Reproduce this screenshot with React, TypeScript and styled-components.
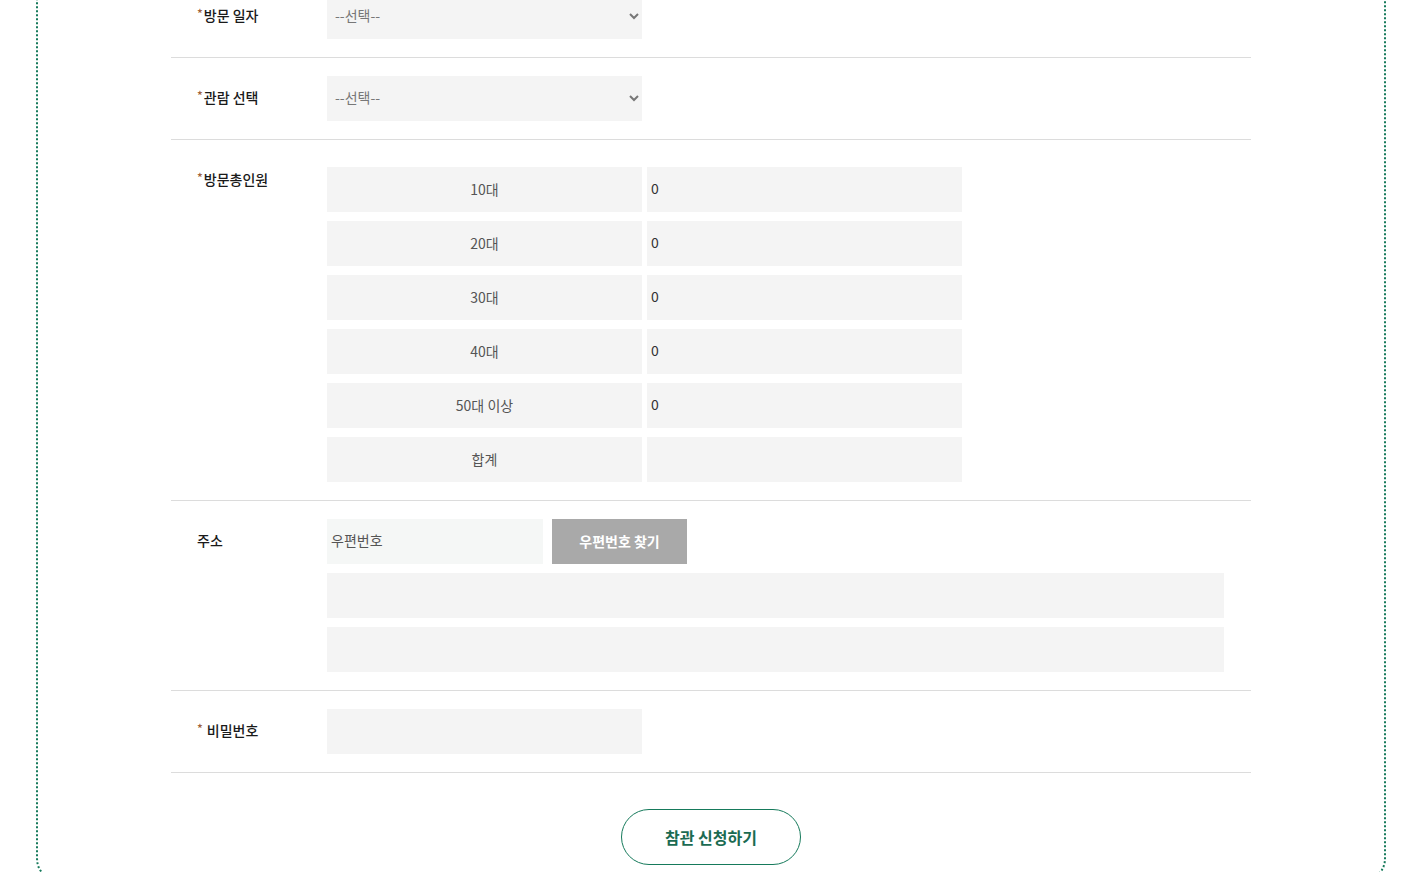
import React from 'react';
import styled, { createGlobalStyle } from 'styled-components';

const GlobalStyle = createGlobalStyle`
  html, body {
    margin: 0;
    padding: 0;
    background: #fff;
    overflow: hidden;
  }
  body {
    font-family: "Noto Sans CJK KR", "Noto Sans", sans-serif;
    color: #222;
  }
  * {
    box-sizing: border-box;
  }
`;

const Page = styled.div`
  width: 1350px;
  margin: -70px auto 0 36px;
`;

const Frame = styled.div`
  border: 2px dotted #167a5b;
  border-radius: 22px;
  padding: 44px 0 14px;
`;

const FormTable = styled.div`
  width: 1080px;
  margin: 0 auto;
`;

const Row = styled.div`
  display: grid;
  grid-template-columns: 156px 1fr;
  align-items: start;
  border-bottom: 1px solid #dcdcdc;
  padding: 18px 0;
`;

const Label = styled.div`
  height: 45px;
  padding-left: 26px;
  padding-bottom: 4px;
  display: flex;
  align-items: center;
  font-size: 14px;
  font-weight: 500;
  color: #1a1a1a;
  white-space: nowrap;
`;

const Star = styled.span<{ $spaced?: boolean }>`
  color: #a0623a;
  font-size: 12px;
  line-height: 0;
  position: relative;
  top: -2px;
  margin-right: ${p => (p.$spaced ? '4px' : '1px')};
`;

const Field = styled.div`
  display: flex;
  flex-direction: column;
  gap: 9px;
`;

const Select = styled.select`
  width: 315px;
  height: 45px;
  border: 0;
  background: #f4f4f4;
  padding: 0 4px 3px;
  font-family: inherit;
  font-size: 14px;
  color: #777;
  outline: none;
`;

const AgeList = styled.div`
  display: grid;
  grid-template-columns: 315px 315px;
  column-gap: 5px;
  row-gap: 9px;
  padding-top: 9px;
`;

const AgeName = styled.div`
  height: 45px;
  padding-bottom: 1px;
  background: #f4f4f4;
  display: flex;
  align-items: center;
  justify-content: center;
  font-size: 14px;
  color: #555;
`;

const TextInput = styled.input<{ $width?: string; $tint?: string }>`
  width: ${p => p.$width || '315px'};
  height: 45px;
  border: 0;
  background: ${p => p.$tint || '#f4f4f4'};
  padding: 0 4px 3px;
  font-family: inherit;
  font-size: 14px;
  color: #333;
  outline: none;

  &::placeholder {
    color: #555;
  }
`;

const InlineGroup = styled.div`
  display: flex;
  gap: 9px;
`;

const GreyButton = styled.button`
  width: 135px;
  height: 45px;
  border: 0;
  padding-bottom: 2px;
  background: #a9a9a9;
  color: #fff;
  font-family: inherit;
  font-size: 14px;
  font-weight: 700;
  cursor: pointer;
`;

const Actions = styled.div`
  display: flex;
  justify-content: center;
  padding-top: 36px;
`;

const SubmitButton = styled.button`
  width: 180px;
  height: 56px;
  border: 1px solid #167a5b;
  border-radius: 28px;
  background: #fff;
  color: #1b6b52;
  font-family: inherit;
  font-size: 16px;
  font-weight: 700;
  cursor: pointer;
`;

const ages = ['10대', '20대', '30대', '40대', '50대 이상'];

const App: React.FC = () => {
  return (
    <>
      <GlobalStyle />
      <Page>
        <Frame>
          <FormTable>
            <Row>
              <Label><Star>*</Star>방문 일자</Label>
              <Field>
                <Select defaultValue="">
                  <option value="">--선택--</option>
                </Select>
              </Field>
            </Row>
            <Row>
              <Label><Star>*</Star>관람 선택</Label>
              <Field>
                <Select defaultValue="">
                  <option value="">--선택--</option>
                </Select>
              </Field>
            </Row>
            <Row>
              <Label><Star>*</Star>방문총인원</Label>
              <AgeList>
                {ages.map(age => (
                  <React.Fragment key={age}>
                    <AgeName>{age}</AgeName>
                    <TextInput defaultValue="0" />
                  </React.Fragment>
                ))}
                <AgeName>합계</AgeName>
                <TextInput readOnly />
              </AgeList>
            </Row>
            <Row>
              <Label>주소</Label>
              <Field>
                <InlineGroup>
                  <TextInput $width="216px" $tint="#f5f7f6" placeholder="우편번호" />
                  <GreyButton>우편번호 찾기</GreyButton>
                </InlineGroup>
                <TextInput $width="897px" />
                <TextInput $width="897px" />
              </Field>
            </Row>
            <Row>
              <Label><Star $spaced>*</Star>비밀번호</Label>
              <Field>
                <TextInput type="password" />
              </Field>
            </Row>
          </FormTable>
          <Actions>
            <SubmitButton>참관 신청하기</SubmitButton>
          </Actions>
        </Frame>
      </Page>
    </>
  );
};

export default App;
